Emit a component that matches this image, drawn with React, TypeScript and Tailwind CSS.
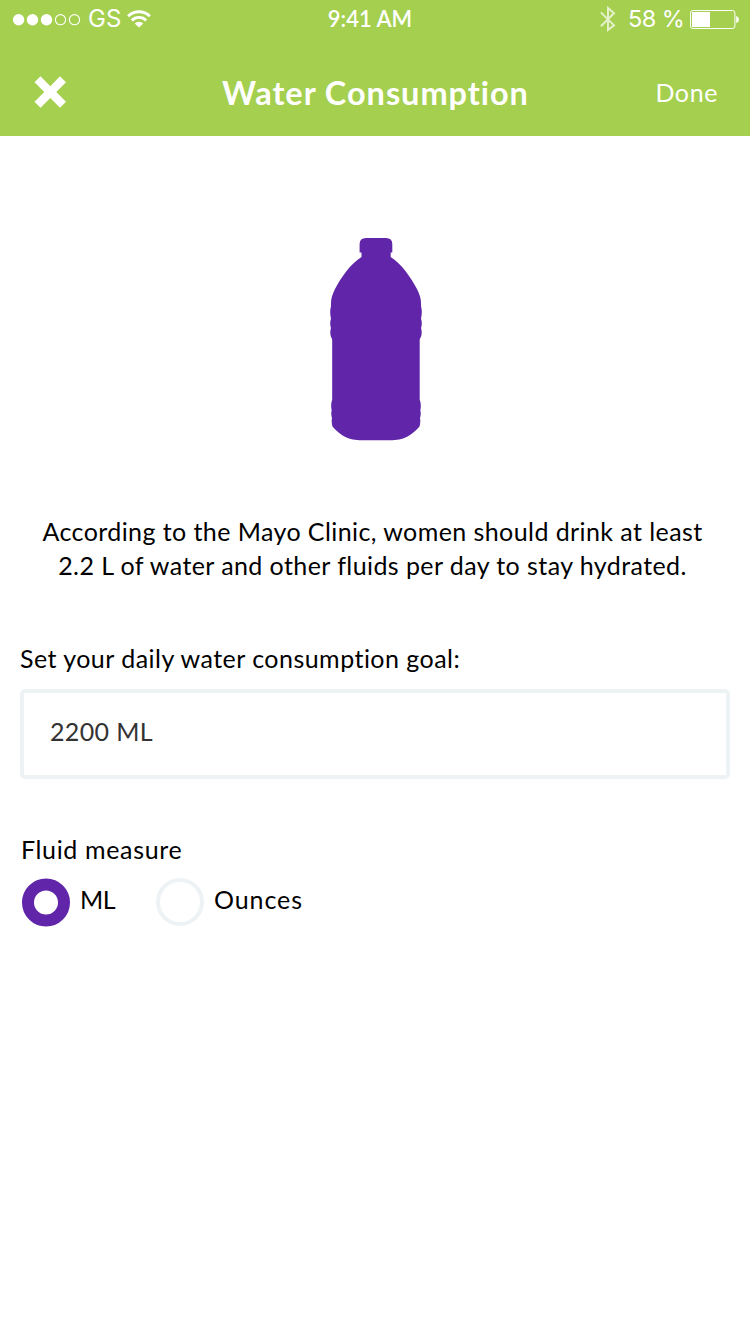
import { useState } from 'react';

function Signal() {
  return (
    <svg className="h-10 w-[69px]" viewBox="12 0 69 40" fill="white" stroke="white">
      {[18.6, 32.5, 46.5].map((x) => (
        <circle key={x} cx={x} cy="19.7" r="5.7" stroke="none" />
      ))}
      {[60.5, 74.5].map((x) => (
        <circle key={x} cx={x} cy="19.7" r="5.1" fill="none" strokeWidth="1.1" />
      ))}
    </svg>
  );
}

function Wifi() {
  return (
    <svg className="ml-[5px] h-10 w-[26px]" viewBox="126 0 26 40" fill="none" stroke="white" strokeWidth="2.9">
      <path d="M128.1 16.2a15.6 15.6 0 0 1 21.8 0" />
      <path d="M131.8 20.4a10.2 10.2 0 0 1 14.4 0" />
      <path d="M139 27.6l-4.3-4.2a6.2 6.2 0 0 1 8.6 0z" fill="white" stroke="none" />
    </svg>
  );
}

function Bluetooth() {
  return (
    <svg className="h-10 w-4" viewBox="600 0 16 40" fill="none" stroke="white" strokeOpacity="0.7" strokeWidth="2">
      <path d="M600.9 12.4L614 25.3L608 30V8L614 13.2L600.9 26.2" />
    </svg>
  );
}

function Battery() {
  return (
    <svg className="h-10 w-[50px]" viewBox="690 0 50 40">
      <rect x="690.5" y="10.5" width="44.4" height="18" rx="2.5" fill="none" stroke="white" />
      <rect x="692" y="12" width="18" height="15" fill="white" />
      <path d="M736.2 16c3.6 1 3.6 6 0 7z" fill="white" />
    </svg>
  );
}

function Bottle() {
  return (
    <svg className="h-[204px] w-[94px]" viewBox="329 237 94 204" fill="#6025a8">
      <path d="M366 238H386Q392.3 238 392.3 244V252.6H390.7V257C402 264 411 278 417 289Q421 297 421 303V306Q422.6 312 421 318.5Q422.6 323.5 421 328Q423 334 419.7 339.5V399.5Q421.6 405 420.3 410.3Q421.3 414 420 418Q420.8 422 419.5 426.5C415 432 408 437 403 438.5C397 440.5 391 440.3 376 440.3C361 440.3 355 440.5 349 438.5C344 437 337 432 332.5 426.5Q331.2 422 332 418Q330.7 414 331.7 410.3Q330.4 405 332.2 399.5V339.5Q329 334 331 328Q329.4 323.5 331 318.5Q329.4 312 331 306V303Q331 297 335 289C341 278 350 264 361.5 257V252.6H359.6V244Q359.6 238 366 238Z" />
    </svg>
  );
}

export default function App() {
  const [goal, setGoal] = useState('2200 ML');
  const [unit, setUnit] = useState('ML');
  return (
    <div className="flex h-[1334px] w-[750px] flex-col bg-white font-['Lato','Liberation_Sans',sans-serif] text-[25px] text-black">
      <header className="h-[136px] bg-[#a4cf4f] text-white">
        <div className="grid h-10 grid-cols-[250px_1fr_250px]">
          <div className="flex pl-3">
            <Signal />
            <span className="ml-[7px] w-[33px] whitespace-nowrap font-['Inter',sans-serif] text-2xl leading-[37px]">GS</span>
            <Wifi />
          </div>
          <div className="pr-[10px] text-center text-[22px] font-semibold leading-[38px]">9:41 AM</div>
          <div className="flex justify-end pr-[10px]">
            <Bluetooth />
            <span className="ml-3 w-[62px] whitespace-nowrap font-['Inter',sans-serif] text-[23.5px] leading-[37px] tracking-[-0.6px]">58 %</span>
            <Battery />
          </div>
        </div>
        <div className="grid h-[96px] grid-cols-[150px_1fr_150px]">
          <button aria-label="Close" className="flex h-[104px] items-center pl-[34px]">
            <svg className="h-8 w-8" viewBox="34 75.8 32 32" fill="white">
              <path d="M40.5 76L50.3 86L60 76L66 82L56.3 91.7L66 101.5L60 107.5L50.3 97.7L40.5 107.5L34.5 101.5L44.3 91.7L34.5 82Z" />
            </svg>
          </button>
          <h1 className="whitespace-nowrap pl-px text-center text-[32.5px] font-bold leading-[105px] tracking-[0.95px]">Water Consumption</h1>
          <button className="h-[104px] pr-[32px] text-right leading-[104px] tracking-[0.6px]">Done</button>
        </div>
      </header>
      <main className="flex flex-col">
        <div className="flex justify-center pl-[2px] pt-[101px]">
          <Bottle />
        </div>
        <p className="mt-[73px] pr-[5px] text-center leading-[34px] tracking-[0.42px]">
          According to the Mayo Clinic, women should drink at least
          <br />
          2.2 L of water and other fluids per day to stay hydrated.
        </p>
        <label htmlFor="goal" className="mt-[59px] pl-5 leading-[34px] tracking-[0.47px]">
          Set your daily water consumption goal:
        </label>
        <input
          id="goal"
          value={goal}
          onChange={(e) => setGoal(e.target.value)}
          className="mx-5 mt-[14px] h-[90px] rounded-[5px] border-4 border-[#edf3f5] pb-[6px] pl-[26px] tracking-[0.35px] text-[#333333] outline-none"
        />
        <h2 className="mt-[53px] pl-[21px] leading-[34px] tracking-[0.65px]">Fluid measure</h2>
        <div className="mt-[12px] flex h-12 pl-[22px]">
          <label className="flex w-[134px] gap-[10px]">
            <input
              type="radio"
              name="unit"
              checked={unit === 'ML'}
              onChange={() => setUnit('ML')}
              className="size-12 translate-y-[0.5px] appearance-none rounded-full border-4 border-[#edf3f5] checked:border-12 checked:border-[#6025a8]"
            />
            <span className="leading-[42px] tracking-[-0.5px]">ML</span>
          </label>
          <label className="flex gap-[10px]">
            <input
              type="radio"
              name="unit"
              checked={unit === 'Ounces'}
              onChange={() => setUnit('Ounces')}
              className="size-12 appearance-none rounded-full border-4 border-[#edf3f5] checked:border-12 checked:border-[#6025a8]"
            />
            <span className="leading-[42px] tracking-[0.9px]">Ounces</span>
          </label>
        </div>
      </main>
    </div>
  );
}
